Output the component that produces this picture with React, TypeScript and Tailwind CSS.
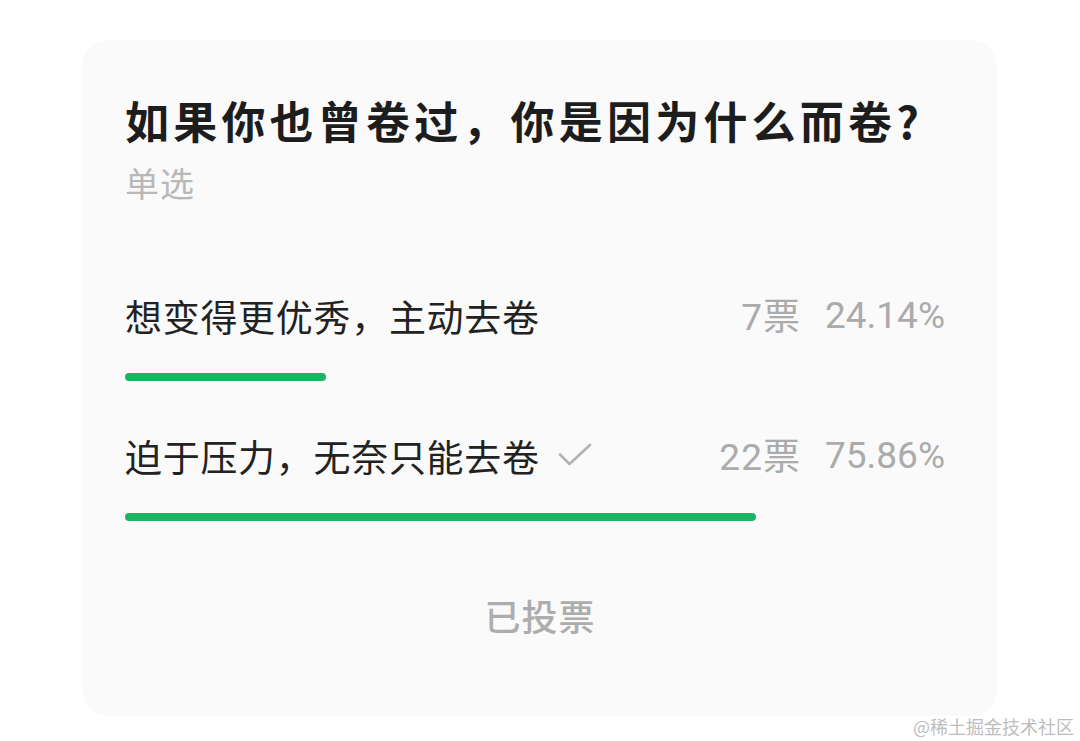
import React from 'react';

interface PollOption {
  label: string;
  votes: number;
  percent: string;
  width: number;
  chosen?: boolean;
}

const options: PollOption[] = [
  { label: '想变得更优秀，主动去卷', votes: 7, percent: '24.14%', width: 24.5 },
  { label: '迫于压力，无奈只能去卷', votes: 22, percent: '75.86%', width: 76.9, chosen: true },
];

const cjk = { fontFamily: '"Noto Sans CJK SC", "Noto Sans", sans-serif' };
const nums = { fontFamily: 'Roboto, "Noto Sans CJK SC", sans-serif' };

const CheckMark = () => (
  <svg className="w-[36px] h-[26px] ml-[17px]" viewBox="0 0 36 26" fill="none">
    <path d="M3 11.5L12.5 21L33 2" stroke="#b3b3b3" strokeWidth={2.6} strokeLinecap="round" strokeLinejoin="round" />
  </svg>
);

export default function App() {
  return (
    <div className="relative w-[1080px] h-[741px] bg-white overflow-hidden" style={cjk}>
      <div className="pt-[40px] pl-[82px]">
        <div className="w-[915px] h-[676px] rounded-[26px] bg-[#fafafa] pt-[54px] pl-[43px] pr-[52px]">
          {/* Header */}
          <h1 className="text-[44px] leading-[52px] font-semibold text-[#1d1d1d] tracking-[4.2px]">
            如果你也曾卷过，你是因为什么而卷?
          </h1>
          <p className="mt-[17px] text-[34px] leading-[40px] text-[#b8b8b8] tracking-[1px]">单选</p>

          {/* Options */}
          <div className="mt-[91px] flex flex-col gap-[53px]">
            {options.map((opt) => (
              <div key={opt.label}>
                <div className="flex items-center justify-between h-[44px]">
                  <div className="flex items-center">
                    <span className="text-[37px] leading-[44px] text-[#222222] tracking-[0.7px]">{opt.label}</span>
                    {opt.chosen && <CheckMark />}
                  </div>
                  <div className="flex items-center text-[37px] leading-[44px] text-[#ababab]" style={nums}>
                    <span className="tracking-[1px]">{opt.votes}<span style={cjk}>票</span></span>
                    <span className="ml-[24px]">{opt.percent}</span>
                  </div>
                </div>
                <div className="mt-[35px] h-[8px]">
                  <div className="h-[8px] rounded-full bg-[#1bb562]" style={{ width: `${opt.width}%` }} />
                </div>
              </div>
            ))}
          </div>

          {/* Footer */}
          <div className="mt-[72px] flex justify-center pl-[10px]">
            <span className="text-[36px] leading-[44px] font-medium text-[#adadad] tracking-[1px]">已投票</span>
          </div>
        </div>
      </div>

      {/* Watermark */}
      <div className="absolute right-[6px] bottom-[4px] text-[18px] leading-[22px] text-[#bdbdbd]" style={{ fontFamily: '"Noto Sans CJK SC", serif' }}>
        @稀土掘金技术社区
      </div>
    </div>
  );
}
